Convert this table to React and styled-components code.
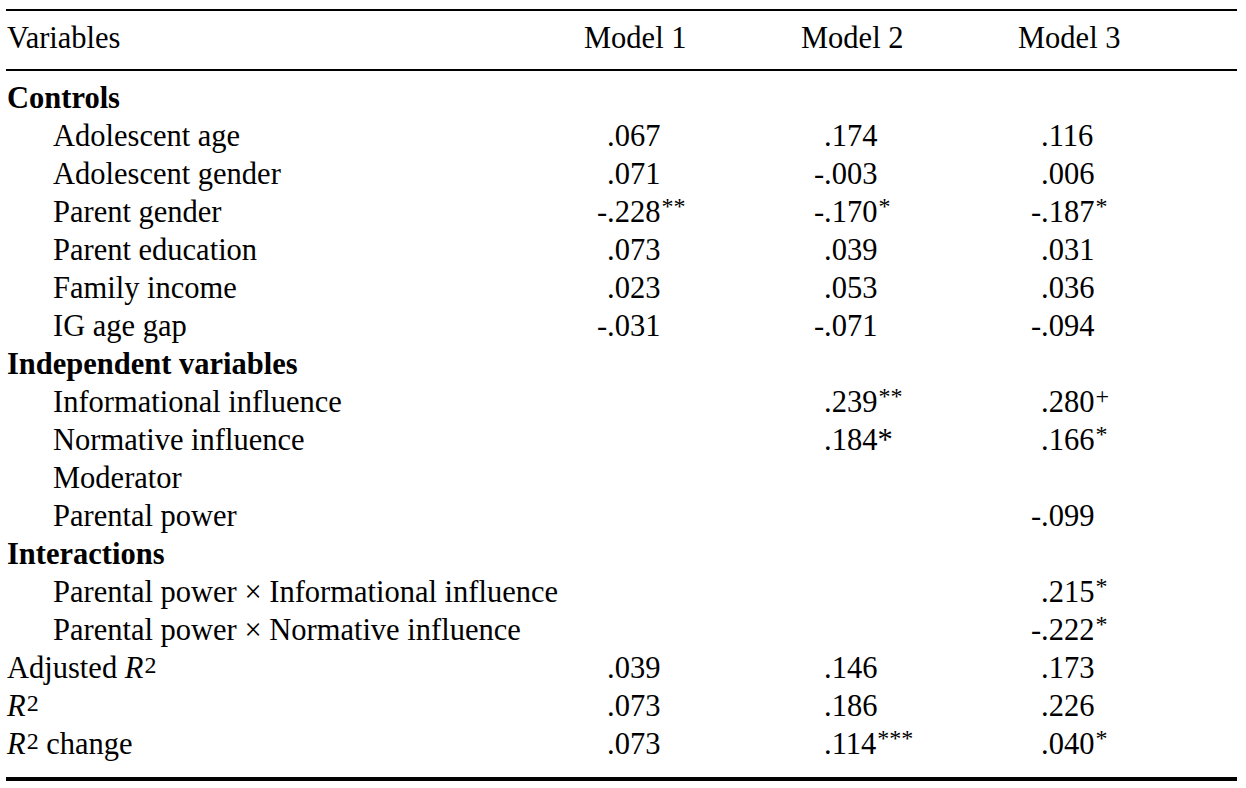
import React from 'react';
import styled, { createGlobalStyle } from 'styled-components';

const GlobalStyle = createGlobalStyle`
  html, body {
    margin: 0;
    padding: 0;
    background: #ffffff;
  }
  body {
    font-family: "Liberation Serif", "Times New Roman", serif;
    color: #000;
  }
`;

const rows = [
  { label: 'Controls', kind: 'section' },
  { label: 'Adolescent age', values: ['.067', '.174', '.116'] },
  { label: 'Adolescent gender', values: ['.071', '-.003', '.006'] },
  { label: 'Parent gender', values: ['-.228^**', '-.170^*', '-.187^*'] },
  { label: 'Parent education', values: ['.073', '.039', '.031'] },
  { label: 'Family income', values: ['.023', '.053', '.036'] },
  { label: 'IG age gap', values: ['-.031', '-.071', '-.094'] },
  { label: 'Independent variables', kind: 'section' },
  { label: 'Informational influence', values: ['', '.239^**', '.280^+'] },
  { label: 'Normative influence', values: ['', '.184*', '.166^*'] },
  { label: 'Moderator', values: ['', '', ''] },
  { label: 'Parental power', values: ['', '', '-.099'] },
  { label: 'Interactions', kind: 'section' },
  { label: 'Parental power × Informational influence', values: ['', '', '.215^*'] },
  { label: 'Parental power × Normative influence', values: ['', '', '-.222^*'] },
  { label: 'Adjusted', r2: 'after', kind: 'stat', values: ['.039', '.146', '.173'] },
  { label: '', r2: 'only', kind: 'stat', values: ['.073', '.186', '.226'] },
  { label: ' change', r2: 'before', kind: 'stat', values: ['.073', '.114^***', '.040^*'] },
];

const App = () => {
  function renderLabel(row) {
    if (!row.r2) return row.label;
    const r2 = (
      <>
        <Italic>R</Italic>
        <PowerTwo>2</PowerTwo>
      </>
    );
    if (row.r2 === 'after') return <>{row.label} {r2}</>;
    if (row.r2 === 'before') return <>{r2}{row.label}</>;
    return r2;
  }

  function renderValue(value, i) {
    if (!value) return <NumberCell key={i} />;
    const [main, sup] = value.split('^');
    const negative = main.startsWith('-');
    const digits = negative ? main.slice(1) : main;
    return (
      <NumberCell key={i}>
        <Sign>{negative ? '-' : ''}</Sign>
        <span>{digits}</span>
        {sup && <Star>{sup}</Star>}
      </NumberCell>
    );
  }

  return (
    <Page>
      <GlobalStyle />
      <Table>
        <HeaderRow>
          <HeadCell first>Variables</HeadCell>
          <HeadCell>Model 1</HeadCell>
          <HeadCell>Model 2</HeadCell>
          <HeadCell>Model 3</HeadCell>
        </HeaderRow>
        <Body>
          {rows.map((row, index) => (
            <Row key={index}>
              <Label bold={row.kind === 'section'} indent={!row.kind}>
                {renderLabel(row)}
              </Label>
              {(row.values || ['', '', '']).map(renderValue)}
            </Row>
          ))}
        </Body>
      </Table>
    </Page>
  );
};

export default App;

const Page = styled.div`
  padding: 9px 9px 0 6px;
`;

const Table = styled.div`
  width: 1231px;
  border-top: 2px solid #000;
  border-bottom: 4px solid #000;
  font-size: 30.5px;
  line-height: 38px;
`;

const HeaderRow = styled.div`
  display: grid;
  grid-template-columns: 578px 217px 217px 1fr;
  padding: 8px 0 12px;
  border-bottom: 2px solid #000;
`;

const HeadCell = styled.div`
  padding-left: ${(props) => (props.first ? '1px' : '0')};
  white-space: nowrap;
`;

const Body = styled.div`
  padding: 8px 0 14px;
`;

const Row = styled.div`
  display: grid;
  grid-template-columns: 578px 217px 217px 1fr;
  height: 38px;
`;

const Label = styled.div`
  padding-left: ${(props) => (props.indent ? '47px' : '1px')};
  font-weight: ${(props) => (props.bold ? 700 : 400)};
  white-space: nowrap;
`;

const NumberCell = styled.div`
  display: flex;
  align-items: baseline;
  padding-left: 13px;
  white-space: nowrap;
`;

const Sign = styled.span`
  display: inline-block;
  width: 10px;
  text-align: right;
`;

const Star = styled.span`
  font-size: 24px;
  line-height: 1;
  position: relative;
  top: -8px;
  margin-left: 1px;
`;

const Italic = styled.span`
  font-style: italic;
`;

const PowerTwo = styled.span`
  font-size: 24px;
  position: relative;
  top: -5px;
  margin-left: 1px;
  line-height: 1;
`;
